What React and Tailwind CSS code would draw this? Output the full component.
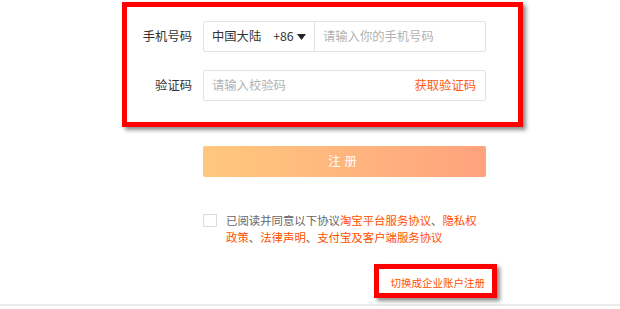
import React from "react";

const F = { fontFamily: '"Noto Sans CJK SC", "Noto Sans", sans-serif' };

export default function App() {
  return (
    <div
      className="relative w-[620px] h-[309px] bg-white overflow-hidden"
      style={F}
    >
      {/* row 1 */}
      <div className="flex items-center pt-[21px]">
        <div className="w-[203px] pr-[11px] text-right text-[12.3px] leading-[31px] text-[#333]">
          手机号码
        </div>
        <div className="flex w-[283px] h-[31px] border border-[#e3e3e3] rounded-[2px]">
          <div className="flex items-center w-[111px] border-r border-[#e3e3e3] pl-[8px] text-[12.3px] text-[#333]">
            <span>中国大陆</span>
            <span className="ml-[12px]">+86</span>
            <svg width="9" height="6" viewBox="0 0 9 6" className="ml-[3px] mt-[1px]">
              <path d="M0 0 H9 L4.5 6 Z" fill="#222" />
            </svg>
          </div>
          <div className="flex items-center pl-[8px] text-[12.3px] text-[#b3b3b3]">
            请输入你的手机号码
          </div>
        </div>
      </div>

      {/* row 2 */}
      <div className="flex items-center mt-[18px]">
        <div className="w-[203px] pr-[11px] text-right text-[12.3px] leading-[31px] text-[#333]">
          验证码
        </div>
        <div className="flex items-center justify-between w-[283px] h-[31px] border border-[#e3e3e3] rounded-[2px] pl-[8px] pr-[9px]">
          <span className="text-[12.3px] text-[#b3b3b3]">请输入校验码</span>
          <span className="text-[12.3px] text-[#ff5a14]">获取验证码</span>
        </div>
      </div>

      {/* button */}
      <div className="ml-[203px] mt-[45px] w-[283px] h-[31px] rounded-[2px] bg-gradient-to-r from-[#ffc87d] to-[#ffa27e] flex items-center justify-center text-white text-[12.3px] tracking-[4px]">
        注册
      </div>

      {/* agreement */}
      <div className="flex ml-[203px] mt-[35px]">
        <div className="w-[14px] h-[13px] border border-[#dcdcdc] bg-white mt-[2px] shrink-0" />
        <div className="ml-[9px] w-[260px] text-[11.4px] leading-[17px] text-[#666]">
          已阅读并同意以下协议
          <span className="text-[#ff5000]">淘宝平台服务协议</span>、
          <span className="text-[#ff5000]">隐私权政策</span>、
          <span className="text-[#ff5000]">法律声明</span>、
          <span className="text-[#ff5000]">支付宝及客户端服务协议</span>
        </div>
      </div>

      {/* switch link */}
      <div className="flex justify-end w-[485px] mt-[30px]">
        <span className="text-[10.5px] leading-[14px] text-[#ff5000]">
          切换成企业账户注册
        </span>
      </div>

      <div className="mt-[14px] h-[2px] bg-[#ebebeb]" />

      {/* annotation boxes */}
      <div className="absolute left-[122px] top-[2px] w-[401px] h-[125px] border-[5px] border-[#ff0000] shadow-[3px_3px_4px_rgba(0,0,0,0.45)]" />
      <div className="absolute left-[374px] top-[264px] w-[123px] h-[34px] border-[5px] border-[#ff0000] shadow-[3px_3px_4px_rgba(0,0,0,0.45)]" />
    </div>
  );
}
